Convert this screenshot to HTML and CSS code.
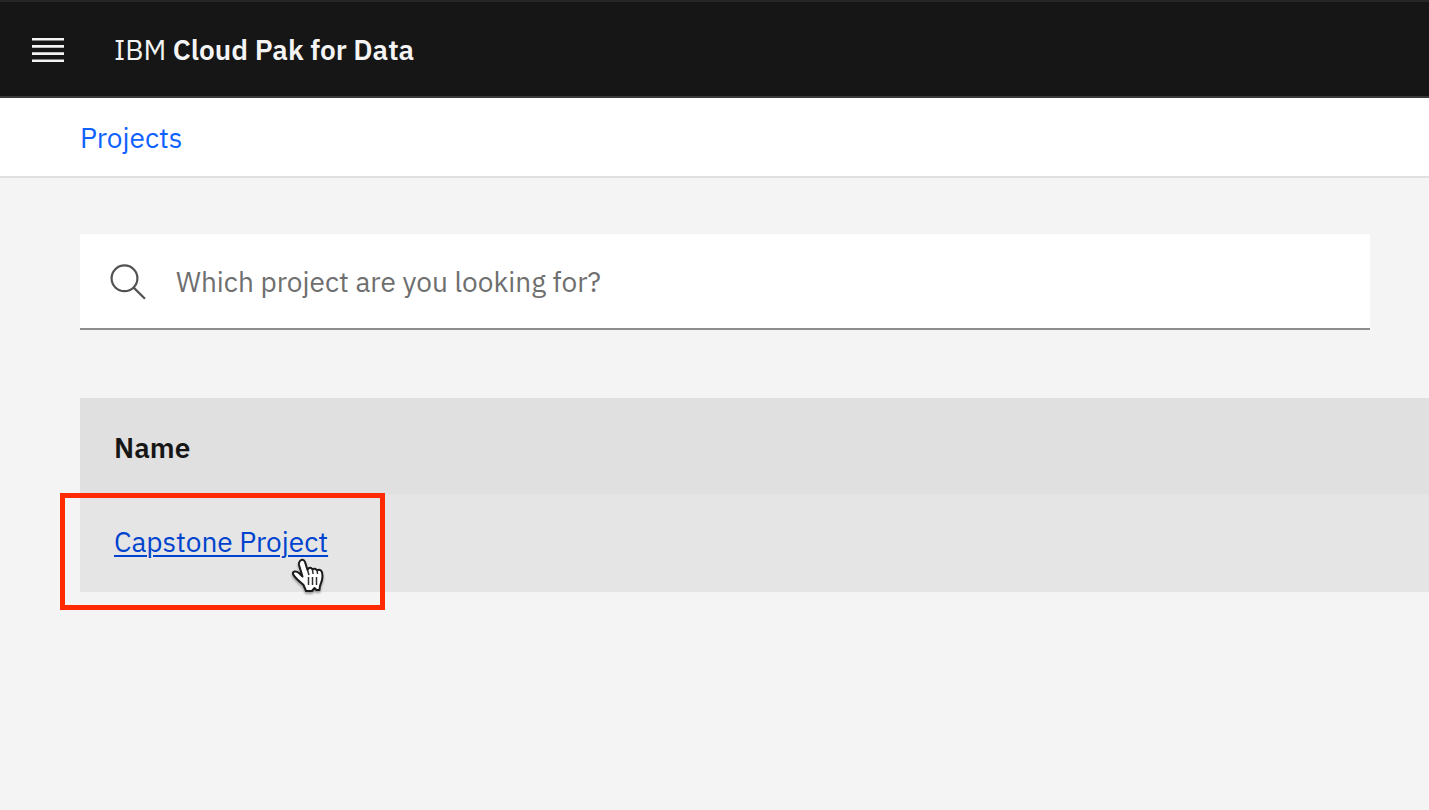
FILE: index.html
```html
<!DOCTYPE html>
<html lang="en">
<head>
<meta charset="utf-8">
<meta name="viewport" content="width=device-width, initial-scale=1">
<title>Projects - IBM Cloud Pak for Data</title>
<link rel="stylesheet" href="styles.css">
</head>
<body>
<header class="header">
  <button class="menu-button" type="button" aria-label="Open menu">
    <svg class="menu-icon" viewBox="0 0 32 24" aria-hidden="true">
      <path d="M0 0H32V2.6H0ZM0 7.1H32V9.7H0ZM0 14.3H32V16.9H0ZM0 21.4H32V24H0Z" fill="#f4f4f4"/>
    </svg>
  </button>
  <a class="brand" href="#">IBM <strong class="brand-name">Cloud Pak for Data</strong></a>
</header>
<nav class="breadcrumb" aria-label="Breadcrumb">
  <a class="breadcrumb-link" href="#">Projects</a>
</nav>
<main class="content">
  <div class="search">
    <svg class="search-icon" viewBox="0 0 36 36" aria-hidden="true">
      <g fill="none" stroke="#525252" stroke-width="2.2">
        <circle cx="14.5" cy="15.3" r="12.9"/>
        <path d="M23.4 24.4L35 35.8"/>
      </g>
    </svg>
    <input class="search-input" type="text" aria-label="Search projects" placeholder="Which project are you looking for?">
  </div>
  <table class="projects">
    <thead>
      <tr><th class="head-cell" scope="col">Name</th></tr>
    </thead>
    <tbody>
      <tr>
        <td class="cell">
          <a class="project-link" href="#">Capstone Project</a>
          <span class="highlight"></span>
          <svg class="pointer" viewBox="0 0 36 40" aria-hidden="true">
            <path d="M9 5C10.5 3 13 3.5 14 6L16.5 14L18 12Q20 11 21.5 13.5Q24 11.5 26.2 14.5Q28 13 30 14.5C31.5 16 31.7 20 31 24C30.5 27 28.5 28 28.5 34H25.5L23.5 32L21 35H15L12.5 29C9 26 4 22 2 18C1.2 15.5 5 14.3 8 17L11.5 20.5L8 9Q7.5 7 9 5Z" fill="#fff" stroke="#1b1b1b" stroke-width="2" stroke-linejoin="round"/>
            <path d="M17.5 21V29M21.5 21V29M25.5 21V29M16.5 14L18 19M21.5 13.5L22 18M26.2 14.5L26.5 18" fill="none" stroke="#303030" stroke-width="1.5"/>
          </svg>
        </td>
      </tr>
    </tbody>
  </table>
</main>
</body>
</html>
```
FILE: styles.css
```css
* {
  box-sizing: border-box;
}

body {
  min-height: 100vh;
  margin: 0;
  background: #f4f4f4;
  color: #161616;
  font-family: "IBM Plex Sans", "Noto Sans", sans-serif;
  font-size: 28px;
  line-height: 36px;
}

.header {
  display: flex;
  align-items: center;
  height: 98px;
  padding-top: 2px;
  background: #161616;
  border-top: 2px solid #262626;
  border-bottom: 2px solid #393939;
}

.menu-button {
  display: flex;
  align-items: center;
  justify-content: center;
  width: 96px;
  height: 92px;
  padding: 0;
  border: 0;
  background: none;
}

.menu-icon {
  width: 32px;
  height: 24px;
}

.brand {
  padding-left: 18px;
  color: #f4f4f4;
  text-decoration: none;
}

.brand-name {
  font-weight: 600;
}

.breadcrumb {
  display: flex;
  align-items: center;
  height: 80px;
  padding: 2px 80px 0;
  background: #fff;
  border-bottom: 2px solid #e0e0e0;
}

.breadcrumb-link {
  color: #0f62fe;
  text-decoration: none;
}

.content {
  padding: 56px 0 56px 80px;
}

.search {
  display: flex;
  align-items: center;
  height: 96px;
  margin: 0 59px 68px 0;
  padding-left: 30px;
  background: #fff;
  border-bottom: 2px solid #8d8d8d;
}

.search-icon {
  flex: none;
  width: 36px;
  height: 36px;
  overflow: visible;
}

.search-input {
  flex: 1;
  min-width: 0;
  height: 94px;
  padding: 0 30px;
  border: 0;
  outline: 0;
  background: none;
  color: #161616;
  font: inherit;
}

.search-input::placeholder {
  color: #6f6f6f;
  opacity: 1;
}

.projects {
  width: 100%;
  border-collapse: separate;
  border-spacing: 0;
  text-align: left;
}

.head-cell {
  height: 96px;
  padding: 4px 34px 0;
  background: #e0e0e0;
  font-weight: 600;
}

.cell {
  position: relative;
  height: 98px;
  padding: 0 34px 2px;
  background: #e5e5e5;
}

.project-link {
  color: #0043ce;
  text-decoration-thickness: 2px;
  text-underline-offset: 3px;
}

.highlight {
  position: absolute;
  top: -1px;
  left: -20px;
  width: 325px;
  height: 117px;
  border: 5px solid #ff2a00;
  pointer-events: none;
}

.pointer {
  position: absolute;
  top: 62px;
  left: 211px;
  width: 36px;
  height: 40px;
  filter: drop-shadow(0 2px 1px rgba(0, 0, 0, 0.35));
  pointer-events: none;
}
```
